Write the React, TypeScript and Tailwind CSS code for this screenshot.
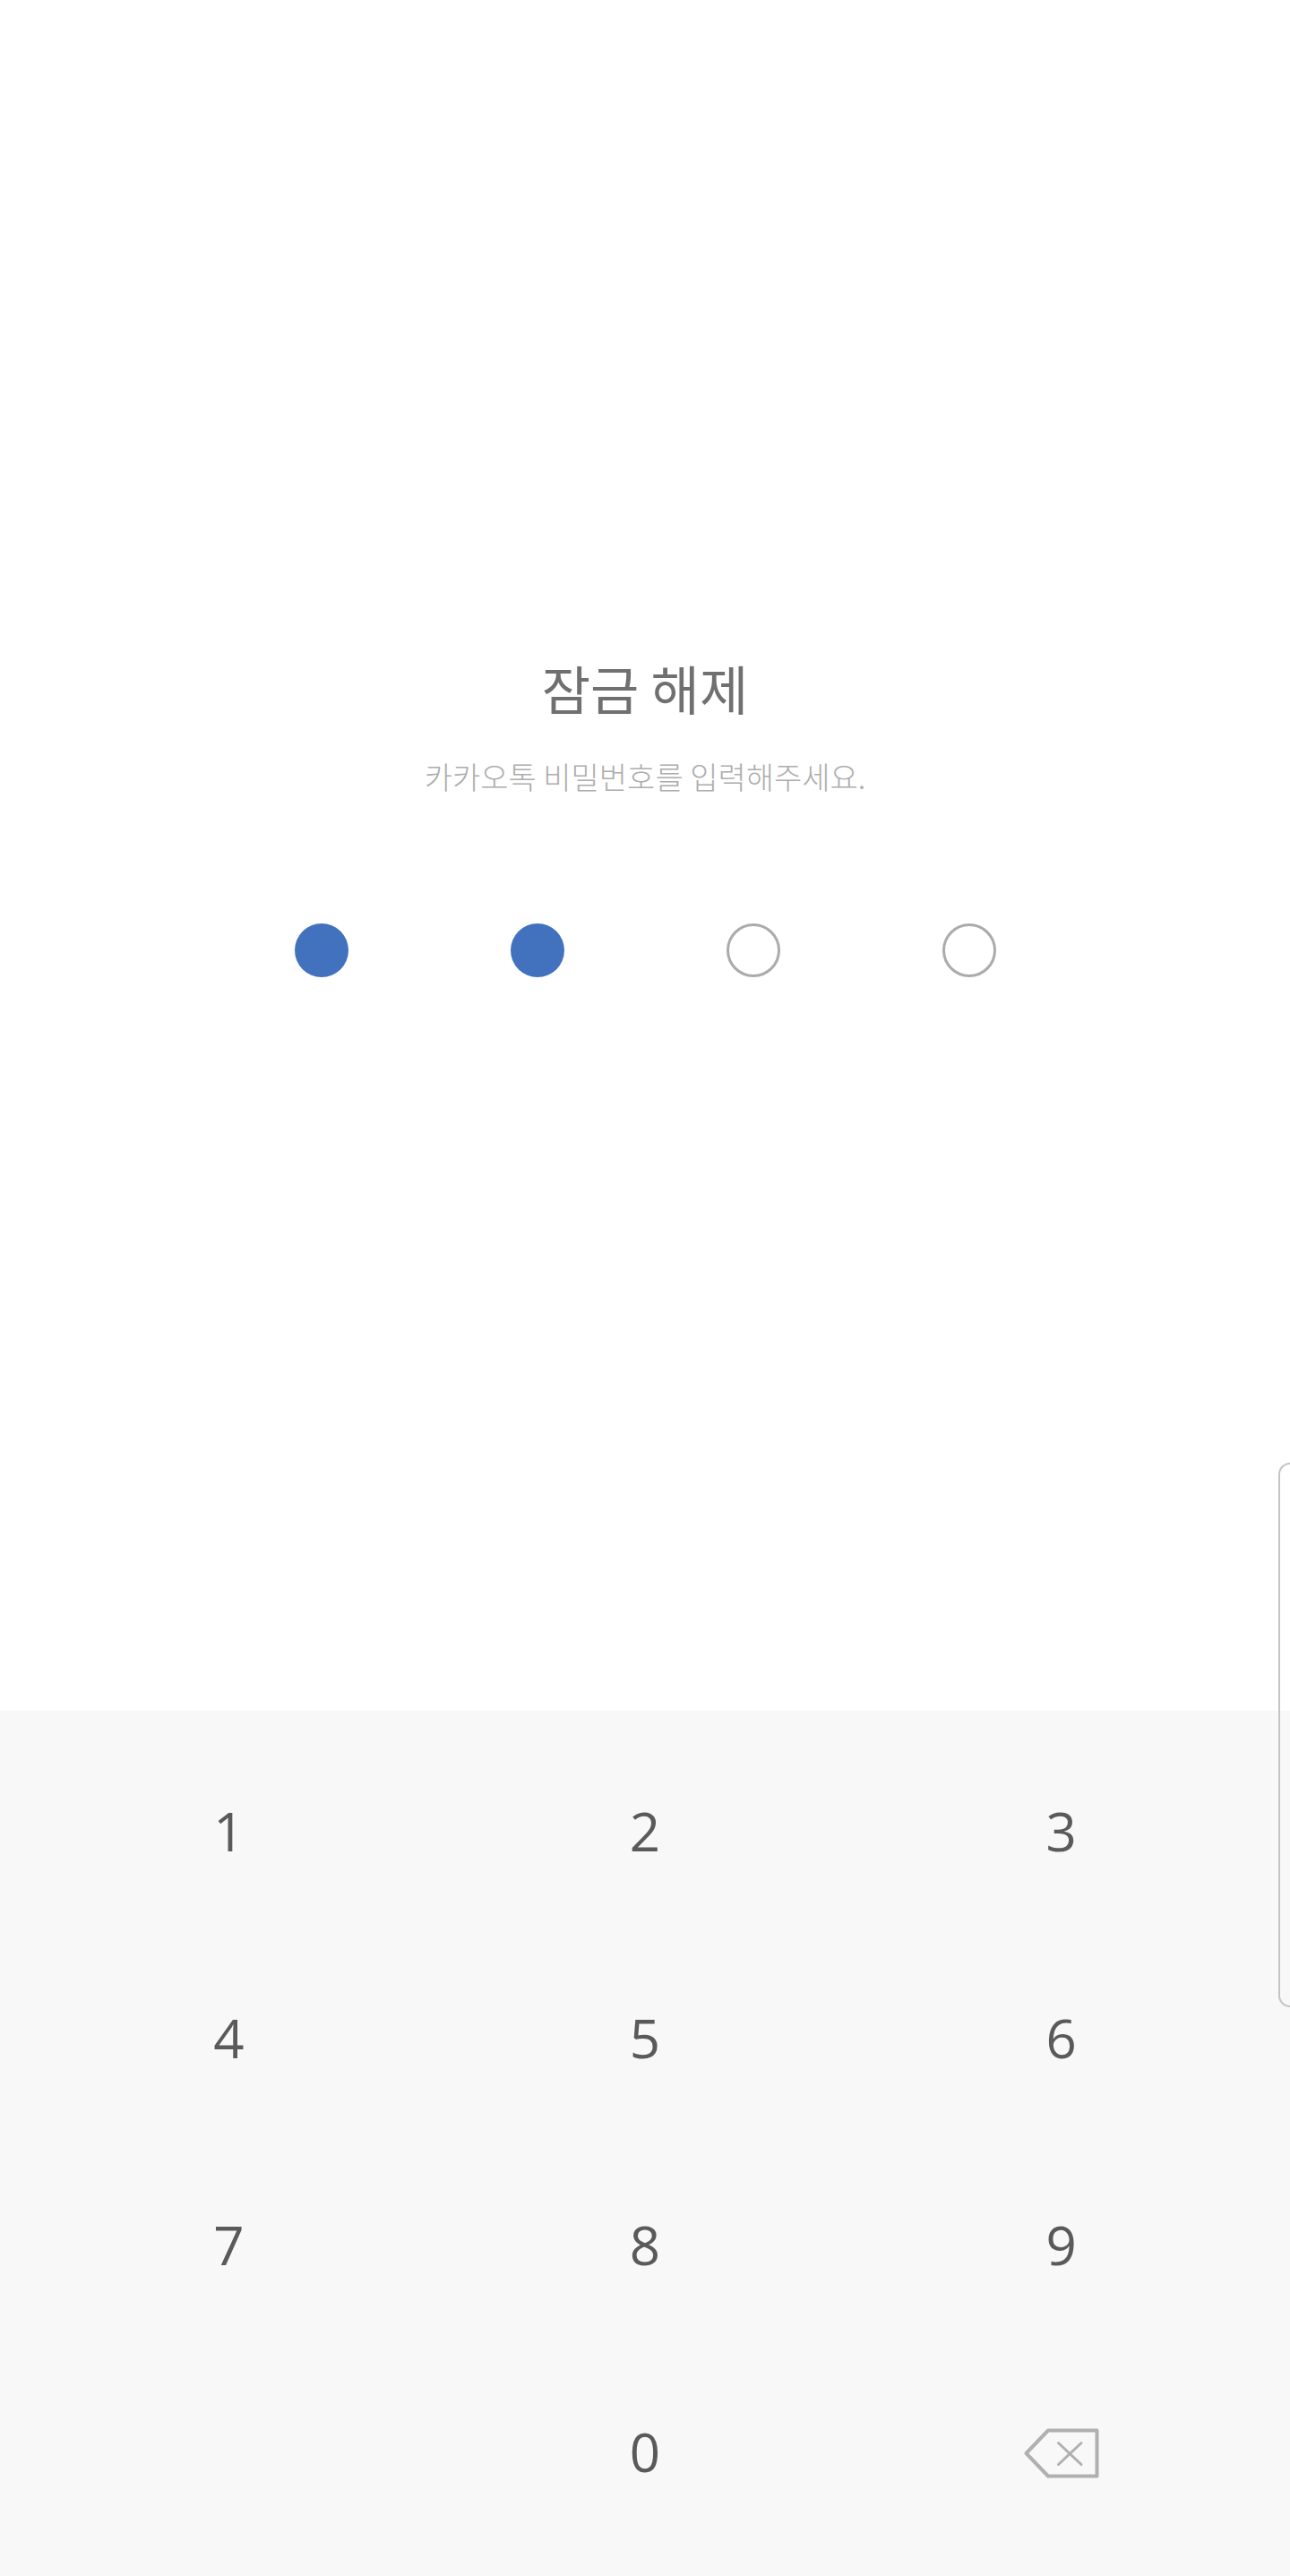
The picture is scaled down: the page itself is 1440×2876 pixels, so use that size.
const keys = ['1', '2', '3', '4', '5', '6', '7', '8', '9', '', '0', 'back'];
const dots = [true, true, false, false];

function BackspaceIcon() {
  return (
    <svg className="mt-[4px]" width="84" height="56" viewBox="0 0 84 56" fill="none" stroke="#b0b0b0" strokeLinejoin="round" strokeLinecap="round">
      <path d="M27 2.5H81.5V53.5H27L2.5 28Z" strokeWidth="4" />
      <path d="M38.5 16.5L64 40.5M64 16.5L38.5 40.5" strokeWidth="3" />
    </svg>
  );
}

export default function App() {
  return (
    <div className="relative flex h-[2876px] w-[1440px] flex-col overflow-hidden bg-white font-['Open_Sans','Noto_Sans_CJK_KR',sans-serif]">
      {/* Lock header */}
      <div className="flex h-[1910px] flex-col items-center pt-[732px]">
        <h1 className="font-['Noto_Sans_CJK_KR',sans-serif] text-[59px] leading-[72px] font-normal text-[#707070]">잠금 해제</h1>
        <p className="mt-[39px] font-['Noto_Sans_CJK_KR',sans-serif] text-[34px] leading-[48px] font-light text-[#adadad]">카카오톡 비밀번호를 입력해주세요.</p>
        <div className="mt-[140px] flex gap-[181px]">
          {dots.map((filled, i) => (
            <div
              key={i}
              className={filled ? 'h-[60px] w-[60px] rounded-full bg-[#4272bd]' : 'h-[60px] w-[60px] rounded-full border-[3px] border-[#ababab]'}
            />
          ))}
        </div>
      </div>

      {/* Number pad */}
      <div className="grid flex-1 grid-cols-3 content-start bg-[#f8f8f8] px-[23px] pt-[18px]">
        {keys.map((key, i) => (
          <div key={i} className="flex h-[231px] items-center justify-center text-[60px] leading-none font-normal text-[#5a5a5a]">
            {key === 'back' ? <BackspaceIcon /> : key}
          </div>
        ))}
      </div>

      {/* Edge panel handle */}
      <div className="absolute top-[1633px] right-0 h-[608px] w-[13px] rounded-l-[14px] border-y-2 border-l-2 border-[#c4c4c4]" />
    </div>
  );
}
